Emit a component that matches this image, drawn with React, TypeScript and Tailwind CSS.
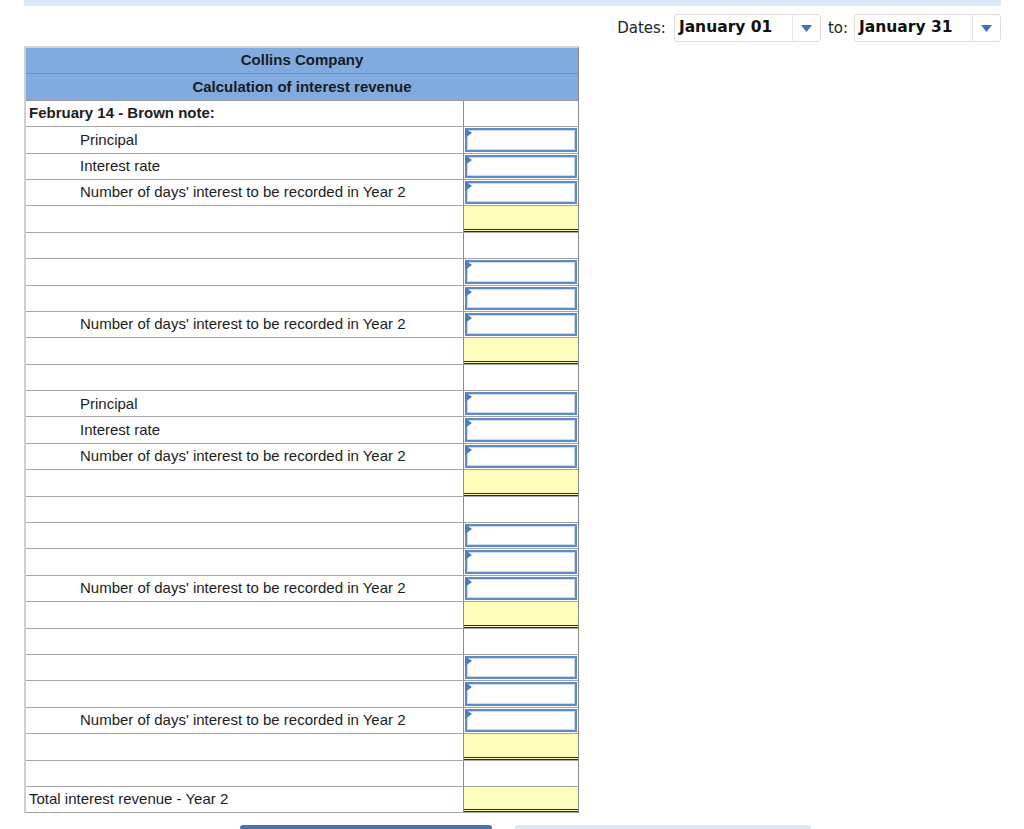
import React from 'react';

type Cell = 'plain' | 'input' | 'total';

type Row = {
  label?: string;
  indent?: boolean;
  bold?: boolean;
  cell: Cell;
};

const daysLabel = "Number of days' interest to be recorded in Year 2";

const rows: Row[] = [
  { label: 'February 14 - Brown note:', bold: true, cell: 'plain' },
  { label: 'Principal', indent: true, cell: 'input' },
  { label: 'Interest rate', indent: true, cell: 'input' },
  { label: daysLabel, indent: true, cell: 'input' },
  { cell: 'total' },
  { cell: 'plain' },
  { cell: 'input' },
  { cell: 'input' },
  { label: daysLabel, indent: true, cell: 'input' },
  { cell: 'total' },
  { cell: 'plain' },
  { label: 'Principal', indent: true, cell: 'input' },
  { label: 'Interest rate', indent: true, cell: 'input' },
  { label: daysLabel, indent: true, cell: 'input' },
  { cell: 'total' },
  { cell: 'plain' },
  { cell: 'input' },
  { cell: 'input' },
  { label: daysLabel, indent: true, cell: 'input' },
  { cell: 'total' },
  { cell: 'plain' },
  { cell: 'input' },
  { cell: 'input' },
  { label: daysLabel, indent: true, cell: 'input' },
  { cell: 'total' },
  { cell: 'plain' },
  { label: 'Total interest revenue - Year 2', cell: 'total' },
];

const DateSelect = ({ value }: { value: string }) => (
  <div className="flex h-[28px] w-[147px] items-stretch rounded-[3px] border border-[#dedede] bg-white">
    <div className="flex flex-1 items-center pl-[4px] text-[15.5px] font-bold text-[#111]">{value}</div>
    <div className="flex w-[28px] items-center justify-center border-l border-[#e6e6e6]">
      <svg width="11" height="7" viewBox="0 0 11 7">
        <path d="M0 0h11L5.5 7z" fill="#3f73bd" />
      </svg>
    </div>
  </div>
);

const InputCell = () => (
  <div className="relative h-full p-[1px]">
    <div className="h-full w-full border-2 border-[#5f8ac6] bg-white shadow-[inset_0_0_0_1px_#c9d9ef]" />
    <svg className="absolute left-[1px] top-[1px]" width="7" height="10" viewBox="0 0 7 10">
      <path d="M0 0l7 5L0 10z" fill="#4a7cc4" />
    </svg>
  </div>
);

const TableRow = ({ row }: { row: Row }) => (
  <div className="flex h-[26.4px] border-b border-[#a4a4a4]">
    <div
      className={`flex w-[438px] items-center border-r border-[#8a8a8a] text-[15px] text-[#1c1c1c] ${
        row.indent ? 'pl-[54px]' : 'pl-[3px]'
      } ${row.bold ? 'font-bold' : ''}`}
    >
      {row.label}
    </div>
    <div className="flex-1">
      {row.cell === 'input' && <InputCell />}
      {row.cell === 'total' && (
        <div className="h-full w-full border-b-[3px] border-double border-[#2a2a2a] bg-[#fffdbb]" />
      )}
    </div>
  </div>
);

export default function App() {
  return (
    <div
      className="h-[829px] w-[1024px] overflow-hidden bg-white px-[24px]"
      style={{ fontFamily: '"Liberation Sans", Arial, sans-serif' }}
    >
      <div className="h-[6px] w-[977px] bg-[#dce9f8]" />

      <div
        className="mt-[8px] flex w-[977px] items-center justify-end text-[15px] text-[#222]"
        style={{ fontFamily: '"DejaVu Sans", Verdana, sans-serif' }}
      >
        <span className="mr-[8px]">Dates:</span>
        <DateSelect value="January 01" />
        <span className="ml-[7px] mr-[6px]">to:</span>
        <DateSelect value="January 31" />
      </div>

      <div className="mt-[4px] w-[555px] border-l-2 border-r border-t-2 border-l-[#cfcfcf] border-r-[#888] border-t-[#d4d4d4]">
        <div className="flex h-[26.4px] items-center justify-center border-b border-[#7b8fa8] bg-[#80aae0] text-[15px] font-bold text-[#1c1c1c]">
          Collins Company
        </div>
        <div className="flex h-[26.4px] items-center justify-center border-b border-[#9a9a9a] bg-[#80aae0] text-[15px] font-bold text-[#1c1c1c]">
          Calculation of interest revenue
        </div>
        {rows.map((row, i) => (
          <TableRow key={i} row={row} />
        ))}
      </div>

      <div className="mt-[12px] flex">
        <div className="ml-[216px] h-[10px] w-[252px] rounded-t-[3px] bg-[#4673b7]" />
        <div className="ml-[23px] h-[10px] w-[296px] rounded-t-[3px] bg-[#dde6f2]" />
      </div>
    </div>
  );
}
